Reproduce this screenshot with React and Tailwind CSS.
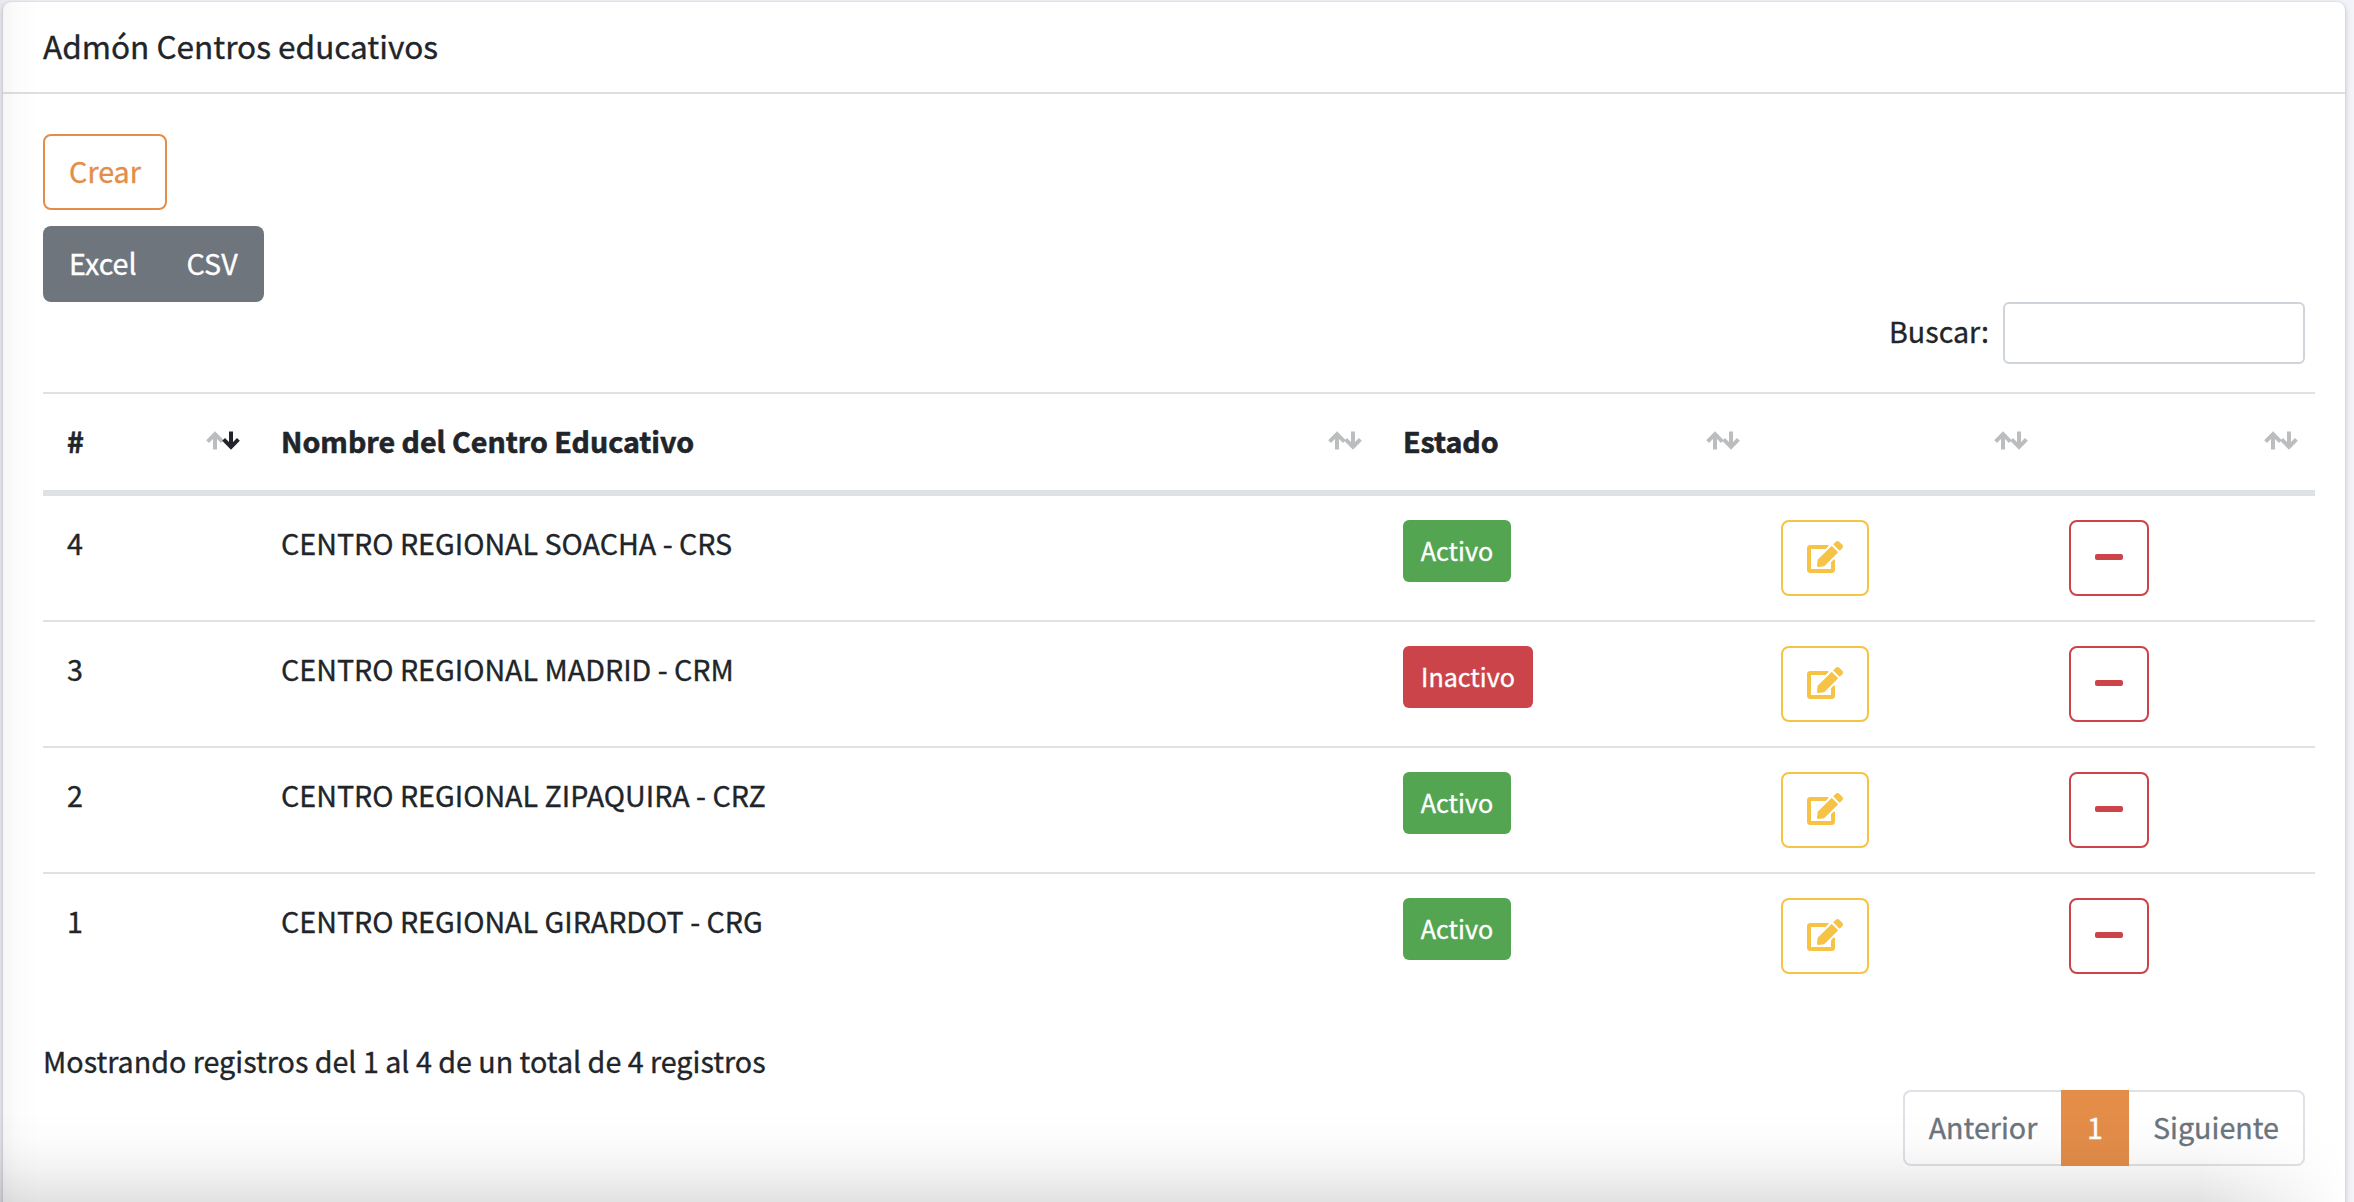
import { FaEdit, FaMinus } from "react-icons/fa";

const rows = [
  { id: 4, name: "CENTRO REGIONAL SOACHA - CRS", active: true },
  { id: 3, name: "CENTRO REGIONAL MADRID - CRM", active: false },
  { id: 2, name: "CENTRO REGIONAL ZIPAQUIRA - CRZ", active: true },
  { id: 1, name: "CENTRO REGIONAL GIRARDOT - CRG", active: true },
];

const columns = ["#", "Nombre del Centro Educativo", "Estado", "", ""];
const grid = "grid grid-cols-[214px_1122px_378px_288px_270px]";

function SortArrows({ desc }) {
  return (
    <svg width="34" height="19" viewBox="0 0 34 19" fill="none" strokeWidth="4" className="mr-[17px] mt-[37px] shrink-0">
      <path d="M9 18.5V3M1.6 10.6L9 3.2L16.4 10.6" stroke="#bcbdbf" />
      <path d="M25 0.5V16M17.6 8.4L25 15.8L32.4 8.4" stroke={desc ? "#212529" : "#bcbdbf"} />
    </svg>
  );
}

export default function App() {
  return (
    <div className="relative h-[1202px] w-[2354px] overflow-hidden bg-[#f3f4f9] pl-[3px] pt-[2px] font-['Noto_Sans_CJK_SC',sans-serif] text-[28.67px] leading-[45px] text-[#212529] [-webkit-text-stroke:0.35px]">
      <div className="h-[1240px] w-[2342px] rounded-[8px] bg-white shadow-[0_0_2px_rgba(0,0,0,0.13),0_2px_6px_rgba(0,0,0,0.2)]">
        <header className="flex h-[92px] items-center border-b-2 border-[#dfdfdf] px-10 pb-[3px] text-[31.57px]">
          <h3>Admón Centros educativos</h3>
        </header>
        <div className="px-10 pt-10">
          <button className="flex h-[76px] w-[124px] items-center justify-center rounded-[8px] border-2 border-[#e48d49] pb-[3px] text-[#e48d49]">Crear</button>
          <div className="mt-4 flex h-[76px] w-[221px] items-center rounded-[8px] bg-[#6e757c] pb-[3px] text-white">
            <button className="pl-[26px]">Excel</button>
            <button className="pl-[50px]">CSV</button>
          </div>
          <label className="flex h-[62px] w-[2262px] items-center justify-end">
            <span className="pb-[5px]">Buscar:</span>
            <input className="ml-[14px] h-[62px] w-[302px] rounded-[6px] border-2 border-[#ced4da] bg-white" />
          </label>
          <div className="mt-7 w-[2272px]">
            <div className={`${grid} h-[104px] border-b-[6px] border-t-2 border-[#dee2e6] text-[28.6px] font-bold [-webkit-text-stroke:0.6px]`}>
              {columns.map((c, i) => (
                <div key={i} className="flex justify-between pl-6">
                  <span className="pt-6">{c}</span>
                  <SortArrows desc={i === 0} />
                </div>
              ))}
            </div>
            {rows.map((r) => (
              <div key={r.id} className={`${grid} h-[126px] border-b-2 border-[#dee2e6] pt-6 last:border-transparent`}>
                <div className="pl-6">{r.id}</div>
                <div className="pl-6">{r.name}</div>
                <div className="pl-6">
                  {r.active ? (
                    <span className="flex h-[62px] w-[108px] items-center justify-center rounded-[6px] bg-[#54a551] pb-[2px] text-[25.1px] text-white">Activo</span>
                  ) : (
                    <span className="flex h-[62px] w-[130px] items-center justify-center rounded-[6px] bg-[#cb4449] pb-[2px] text-[25.1px] text-white">Inactivo</span>
                  )}
                </div>
                <div className="pl-6">
                  <button className="flex h-[76px] w-[88px] justify-center rounded-[8px] border-2 border-[#f6c344] pt-[19px] text-[#f6c344]">
                    <FaEdit className="h-8 w-9" />
                  </button>
                </div>
                <div className="pl-6">
                  <button className="flex h-[76px] w-[80px] justify-center rounded-[8px] border-2 border-[#cb4449] pt-[19px] text-[#cb4449]">
                    <FaMinus className="h-8 w-7" />
                  </button>
                </div>
              </div>
            ))}
          </div>
          <p className="mt-[38px]">Mostrando registros del 1 al 4 de un total de 4 registros</p>
          <nav className="mt-[7px] flex w-[2262px] justify-end text-[#6c757d]">
            <span className="flex h-[76px] w-[158px] items-center justify-center rounded-l-[8px] border-2 border-r-0 border-[#dee2e6] pb-[4px]">Anterior</span>
            <span className="flex h-[76px] w-[68px] items-center justify-center bg-[#e48d49] pb-[4px] text-white">1</span>
            <span className="flex h-[76px] w-[176px] items-center justify-center rounded-r-[8px] border-2 border-l-0 border-[#dee2e6] pb-[4px]">Siguiente</span>
          </nav>
        </div>
      </div>
      <div className="pointer-events-none absolute inset-y-0 left-0 w-[40px] bg-[linear-gradient(to_right,rgba(0,0,0,0.045),rgba(0,0,0,0.012)_45%,transparent)]" />
      <div className="pointer-events-none absolute bottom-0 left-0 h-[90px] w-full bg-[linear-gradient(to_top,rgba(0,0,0,0.115),rgba(0,0,0,0.05)_35%,rgba(0,0,0,0.012)_68%,transparent)] [mask-image:linear-gradient(to_right,black_93.5%,transparent_99.7%)]" />
    </div>
  );
}
